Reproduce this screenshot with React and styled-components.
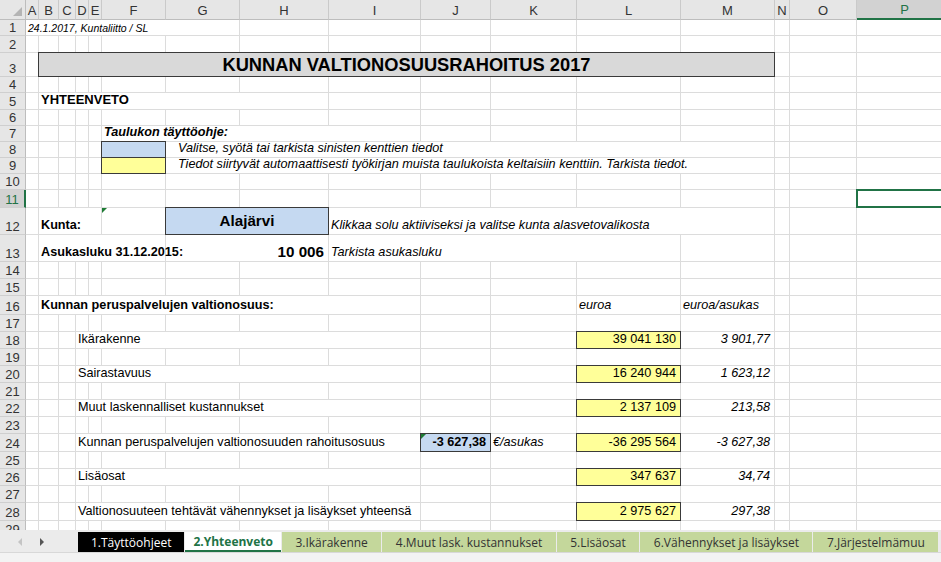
import React from "react";
import styled, { createGlobalStyle, css } from "styled-components";

const GlobalStyle = createGlobalStyle`
  html, body { margin: 0; padding: 0; overflow: hidden; background: #fff; }
  body { font-family: "Liberation Sans", Arial, sans-serif; }
`;

const COLS = [26, 13, 20, 17, 13, 13, 64, 74, 89, 92, 70, 86, 104, 94, 15, 67, 96];
const ROWS = [16, 17, 24, 16, 17, 16, 16, 16, 16, 16, 18, 27, 27, 17, 17, 19, 17, 17, 17, 17, 17, 17, 17, 18, 17, 17, 17, 18, 17];
const LETTERS = "ABCDEFGHIJKLMNOP".split("");
const SELECTED_ROW = 11;
const SELECTED_COL = "P";

const FILLS = { blue: "#c5d9f1", yellow: "#ffff99", gray: "#d9d9d9" };

const Window = styled.div`
  width: 941px;
  height: 574px;
  overflow: hidden;
  display: flex;
  flex-direction: column;
  background: #fff;
`;

const Sheet = styled.div`
  height: 530px;
  flex: none;
  overflow: hidden;
  display: grid;
  grid-template-columns: ${COLS.map((c) => c + "px").join(" ")};
  grid-template-rows: 20px ${ROWS.map((r) => r + "px").join(" ")};
  width: ${COLS.reduce((a, b) => a + b, 0)}px;
  color: #000;
`;

const Corner = styled.div`
  position: relative;
  background: #e6e6e6;
  border-right: 1px solid #bdbdbd;
  border-bottom: 1px solid #bdbdbd;
  &::after {
    content: "";
    position: absolute;
    right: 3px;
    bottom: 3px;
    width: 0;
    height: 0;
    border-left: 9px solid transparent;
    border-bottom: 9px solid #b4b4b4;
  }
`;

const ColHead = styled.div`
  background: ${(p) => (p.$selected ? "#d2d2d2" : "#e6e6e6")};
  border-right: 1px solid #cacaca;
  border-bottom: ${(p) => (p.$selected ? "2px solid #217346" : "1px solid #bdbdbd")};
  color: ${(p) => (p.$selected ? "#217346" : "#333")};
  font-size: 13px;
  display: flex;
  align-items: center;
  justify-content: center;
  padding-top: 1px;
  box-sizing: border-box;
`;

const RowHead = styled.div`
  background: ${(p) => (p.$selected ? "#d2d2d2" : "#e6e6e6")};
  border-right: ${(p) => (p.$selected ? "2px solid #217346" : "1px solid #bdbdbd")};
  border-bottom: 1px solid #cfcfcf;
  color: ${(p) => (p.$selected ? "#217346" : "#333")};
  font-size: 13px;
  display: flex;
  align-items: flex-end;
  justify-content: center;
  line-height: 15px;
  box-sizing: border-box;
`;

const Cell = styled.div`
  grid-column: span ${(p) => p.$span || 1};
  position: relative;
  box-sizing: border-box;
  min-width: 0;
  display: flex;
  align-items: ${(p) => (p.$valign === "center" ? "center" : "flex-end")};
  justify-content: ${(p) =>
    p.$align === "right" ? "flex-end" : p.$align === "center" ? "center" : "flex-start"};
  border-right: 1px solid #dcdcdc;
  border-bottom: 1px solid #dcdcdc;
  background: ${(p) => (p.$fill ? FILLS[p.$fill] : "transparent")};
  padding: 0 ${(p) => (p.$align === "right" ? 4 : 2)}px 1px ${(p) => p.$indent ?? 2}px;
  font-size: ${(p) => p.$size || 12.67}px;
  line-height: 1.15;
  font-weight: ${(p) => (p.$bold ? 700 : 400)};
  font-style: ${(p) => (p.$italic ? "italic" : "normal")};
  white-space: nowrap;
  ${(p) =>
    p.$box &&
    css`
      &::after {
        content: "";
        position: absolute;
        inset: -1px -1px -1px -1px;
        border: 1px solid #3a3a3a;
        pointer-events: none;
        z-index: 1;
      }
    `}
  ${(p) =>
    p.$selected &&
    css`
      &::after {
        content: "";
        position: absolute;
        inset: -1px -1px -1px -1px;
        border: 2px solid #217346;
        pointer-events: none;
        z-index: 1;
      }
    `}
  ${(p) =>
    p.$tri &&
    css`
      &::before {
        content: "";
        position: absolute;
        left: 0;
        top: 0;
        width: 0;
        height: 0;
        border-top: 5px solid #1e7b34;
        border-right: 5px solid transparent;
        z-index: 2;
      }
    `}
`;

const dataRow = (label, euro, perCapita) => [
  { c: "D", span: 6, text: label },
  { c: "L", text: euro, align: "right", fill: "yellow", box: true },
  { c: "M", text: perCapita, align: "right", italic: true },
];

const SPECS = {
  1: [{ c: "A", span: 7, text: "24.1.2017, Kuntaliitto / SL", italic: true, size: 10.5 }],
  3: [
    { c: "B", span: 12, text: "KUNNAN VALTIONOSUUSRAHOITUS 2017", bold: true, size: 18.3, align: "center", fill: "gray", box: true },
  ],
  5: [{ c: "B", span: 7, text: "YHTEENVETO", bold: true, size: 13 }],
  7: [{ c: "F", span: 4, text: "Taulukon täyttöohje:", bold: true, italic: true }],
  8: [
    { c: "F", fill: "blue", box: true },
    { c: "G", span: 7, text: "Valitse, syötä tai tarkista sinisten kenttien tiedot", italic: true, indent: 12 },
  ],
  9: [
    { c: "F", fill: "yellow", box: true },
    {
      c: "G",
      span: 7,
      text: "Tiedot siirtyvät automaattisesti työkirjan muista taulukoista keltaisiin kenttiin. Tarkista tiedot.",
      italic: true,
      indent: 12,
    },
  ],
  11: [{ c: "P", selected: true }],
  12: [
    { c: "B", span: 4, text: "Kunta:", bold: true },
    { c: "F", tri: true },
    { c: "G", span: 2, text: "Alajärvi", bold: true, size: 15.2, align: "center", valign: "center", fill: "blue", box: true },
    { c: "I", span: 5, text: "Klikkaa solu aktiiviseksi ja valitse kunta alasvetovalikosta", italic: true },
  ],
  13: [
    { c: "B", span: 5, text: "Asukasluku 31.12.2015:", bold: true },
    { c: "G", span: 2, text: "10 006", bold: true, size: 15.2, align: "right" },
    { c: "I", span: 4, text: "Tarkista asukasluku", italic: true },
  ],
  16: [
    { c: "B", span: 8, text: "Kunnan peruspalvelujen valtionosuus:", bold: true },
    { c: "L", text: "euroa", italic: true },
    { c: "M", text: "euroa/asukas", italic: true },
  ],
  18: dataRow("Ikärakenne", "39 041 130", "3 901,77"),
  20: dataRow("Sairastavuus", "16 240 944", "1 623,12"),
  22: dataRow("Muut laskennalliset kustannukset", "2 137 109", "213,58"),
  24: [
    { c: "D", span: 6, text: "Kunnan peruspalvelujen valtionosuuden rahoitusosuus" },
    { c: "J", text: "-3 627,38", bold: true, align: "right", fill: "blue", box: true, tri: true },
    { c: "K", text: "€/asukas", italic: true },
    { c: "L", text: "-36 295 564", align: "right", fill: "yellow", box: true },
    { c: "M", text: "-3 627,38", align: "right", italic: true },
  ],
  26: dataRow("Lisäosat", "347 637", "34,74"),
  28: dataRow("Valtionosuuteen tehtävät vähennykset ja lisäykset yhteensä", "2 975 627", "297,38"),
};

function renderRow(r) {
  const specs = SPECS[r] || [];
  const out = [
    <RowHead key={`h${r}`} $selected={r === SELECTED_ROW}>
      {r}
    </RowHead>,
  ];
  let i = 0;
  while (i < LETTERS.length) {
    const s = specs.find((x) => LETTERS.indexOf(x.c) === i);
    if (s) {
      out.push(
        <Cell
          key={`${r}-${i}`}
          $span={s.span}
          $bold={s.bold}
          $italic={s.italic}
          $size={s.size}
          $align={s.align}
          $valign={s.valign}
          $fill={s.fill}
          $box={s.box}
          $tri={s.tri}
          $selected={s.selected}
          $indent={s.indent}
        >
          {s.text}
        </Cell>
      );
      i += s.span || 1;
    } else {
      out.push(<Cell key={`${r}-${i}`} />);
      i += 1;
    }
  }
  return out;
}

const TabBar = styled.div`
  height: 22px;
  flex: none;
  display: flex;
  align-items: flex-start;
  padding-top: 2px;
  box-sizing: border-box;
  background: #ebebeb;
`;

const Nav = styled.div`
  width: 78px;
  flex: none;
  display: flex;
  align-items: center;
  height: 20px;
  gap: 16px;
  padding-left: 17px;
  box-sizing: border-box;
`;

const Tabs = styled.div`
  display: flex;
  gap: 1px;
  white-space: nowrap;
`;

const TAB_STYLES = {
  dark: css`
    background: #000;
    color: #fff;
    padding: 0 13px;
  `,
  active: css`
    background: #fff;
    color: #217346;
    font-weight: 700;
    border-bottom: 2px solid #217346;
    padding: 1px 8px 0;
  `,
  green: css`
    background: #c4d79b;
    color: #333;
    padding: 0 13.5px;
  `,
};

const Tab = styled.div`
  height: 20px;
  box-sizing: border-box;
  display: flex;
  align-items: center;
  font-family: "Open Sans", "Liberation Sans", sans-serif;
  font-size: 12px;
  ${(p) => TAB_STYLES[p.$variant]}
`;

const More = styled.div`
  height: 20px;
  display: flex;
  align-items: center;
  padding-left: 3px;
  color: #333;
  font-size: 12px;
`;

const StatusBar = styled.div`
  height: 22px;
  flex: none;
  background: #f3f3f3;
  border-top: 1px solid #d8d8d8;
  box-sizing: border-box;
  padding: 5px 0 0 6px;
  font-family: "Open Sans", "Liberation Sans", sans-serif;
  font-size: 11.5px;
  color: #444;
`;

const TABS = [
  { label: "1.Täyttöohjeet", variant: "dark" },
  { label: "2.Yhteenveto", variant: "active" },
  { label: "3.Ikärakenne", variant: "green" },
  { label: "4.Muut lask. kustannukset", variant: "green" },
  { label: "5.Lisäosat", variant: "green" },
  { label: "6.Vähennykset ja lisäykset", variant: "green" },
  { label: "7.Järjestelmämuu", variant: "green" },
];

const Arrow = ({ dir, color }) => (
  <svg width="6" height="8" viewBox="0 0 6 8">
    {dir === "left" ? (
      <polygon points="5,0 5,8 1,4" fill={color} />
    ) : (
      <polygon points="1,0 1,8 5,4" fill={color} />
    )}
  </svg>
);

export default function App() {
  return (
    <>
      <GlobalStyle />
      <Window>
        <Sheet>
          <Corner />
          {LETTERS.map((l) => (
            <ColHead key={l} $selected={l === SELECTED_COL}>
              {l}
            </ColHead>
          ))}
          {ROWS.map((_, idx) => renderRow(idx + 1))}
        </Sheet>
        <TabBar>
          <Nav>
            <Arrow dir="left" color="#c4c4c4" />
            <Arrow dir="right" color="#555" />
          </Nav>
          <Tabs>
            {TABS.map((t) => (
              <Tab key={t.label} $variant={t.variant}>
                {t.label}
              </Tab>
            ))}
            <More>…</More>
          </Tabs>
        </TabBar>
        <StatusBar>Valmis</StatusBar>
      </Window>
    </>
  );
}
